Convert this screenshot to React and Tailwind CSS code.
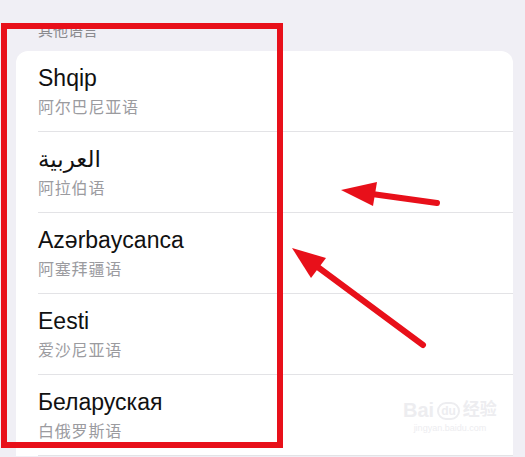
import React from 'react'

const FONT = '"Liberation Sans", "DejaVu Sans", "Noto Sans CJK SC", sans-serif'

const languages = [
  { name: 'Shqip', zh: '阿尔巴尼亚语' },
  { name: 'العربية', zh: '阿拉伯语' },
  { name: 'Azərbaycanca', zh: '阿塞拜疆语' },
  { name: 'Eesti', zh: '爱沙尼亚语' },
  { name: 'Беларуская', zh: '白俄罗斯语' },
]

function LanguageRow({ name, zh }) {
  return (
    <div className="h-[81px] pl-[22px]">
      <div className="flex h-full flex-col border-b border-[#e3e3e6] pt-[13px]">
        <div className="text-left text-[23px] leading-[28px] text-[#111]">
          <span dir="auto">{name}</span>
        </div>
        <div className="mt-[6px] text-[16px] leading-[20px] tracking-[0.8px] text-[#9b9b9f]">{zh}</div>
      </div>
    </div>
  )
}

function Arrows() {
  return (
    <svg className="pointer-events-none absolute inset-0" width="525" height="457" viewBox="0 0 525 457">
      <line x1="437" y1="203" x2="372" y2="194" stroke="#e8101a" strokeWidth="6" strokeLinecap="round" />
      <polygon points="341,190 377,182 373,206" fill="#e8101a" />
      <line x1="423" y1="345" x2="315" y2="265" stroke="#e8101a" strokeWidth="6" strokeLinecap="round" />
      <polygon points="292,248 326,258 311,278" fill="#e8101a" />
    </svg>
  )
}

export default function App() {
  return (
    <div className="relative h-[457px] w-[525px] overflow-hidden bg-[#f0eff5]" style={{ fontFamily: FONT }}>
      <div className="pl-[38px] pt-[21px] text-[15px] leading-[20px] text-[#8a8a8e]">其他语言</div>
      <div className="ml-[16px] mr-[12px] mt-[10px] overflow-hidden rounded-t-[12px] bg-white">
        {languages.map((l) => (
          <LanguageRow key={l.name} name={l.name} zh={l.zh} />
        ))}
      </div>

      {/* watermark */}
      <div className="pointer-events-none absolute left-[403px] top-[400px] flex flex-col items-center text-[#ededf0]">
        <div className="flex items-end gap-[3px]">
          <span className="text-[20px] font-bold leading-[20px]">Bai</span>
          <span className="rounded-full border-2 border-[#ededf0] px-[2px] text-[12px] font-bold leading-[14px]">du</span>
          <span className="text-[17px] font-bold leading-[20px]">经验</span>
        </div>
        <div className="mt-[2px] text-[9px] leading-[12px]">jingyan.baidu.com</div>
      </div>

      {/* annotation */}
      <div className="pointer-events-none absolute left-[1px] top-[23px] h-[425px] w-[282px] border-[6px] border-[#e8101a]" />
      <Arrows />
    </div>
  )
}
